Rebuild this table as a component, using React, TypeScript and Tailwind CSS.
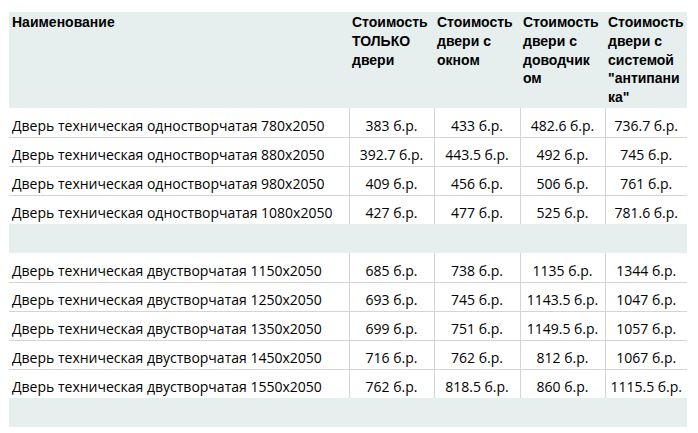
import type { ReactNode } from "react";

const headers: ReactNode[] = [
  "Наименование",
  "Стоимость ТОЛЬКО двери",
  "Стоимость двери с окном",
  <>
    Стоимость двери с доводчик
    <br />
    ом
  </>,
  'Стоимость двери с системой "антипаника"',
];

type Row = [string, string, string, string, string];

const single: Row[] = [
  ["Дверь техническая одностворчатая 780x2050", "383 б.р.", "433 б.р.", "482.6 б.р.", "736.7 б.р."],
  ["Дверь техническая одностворчатая 880x2050", "392.7 б.р.", "443.5 б.р.", "492 б.р.", "745 б.р."],
  ["Дверь техническая одностворчатая 980x2050", "409 б.р.", "456 б.р.", "506 б.р.", "761 б.р."],
  ["Дверь техническая одностворчатая 1080x2050", "427 б.р.", "477 б.р.", "525 б.р.", "781.6 б.р."],
];

const double: Row[] = [
  ["Дверь техническая двустворчатая 1150x2050", "685 б.р.", "738 б.р.", "1135 б.р.", "1344 б.р."],
  ["Дверь техническая двустворчатая 1250x2050", "693 б.р.", "745 б.р.", "1143.5 б.р.", "1047 б.р."],
  ["Дверь техническая двустворчатая 1350x2050", "699 б.р.", "751 б.р.", "1149.5 б.р.", "1057 б.р."],
  ["Дверь техническая двустворчатая 1450x2050", "716 б.р.", "762 б.р.", "812 б.р.", "1067 б.р."],
  ["Дверь техническая двустворчатая 1550x2050", "762 б.р.", "818.5 б.р.", "860 б.р.", "1115.5 б.р."],
];

const DataRows = ({ rows }: { rows: Row[] }) => (
  <>
    {rows.map((row, r) => {
      const last = r === rows.length - 1;
      return (
        <tr key={row[0]} className="h-[29px]">
          {row.map((cell, c) => (
            <td
              key={c}
              className={`align-bottom p-0 pb-[2px] whitespace-nowrap ${
                c === 0 ? "text-left pl-[3px]" : "text-center"
              } ${c < 4 ? "border-r border-[#d4d4d4]" : ""} ${
                last ? "" : "border-b border-[#d4d4d4]"
              }`}
            >
              {cell}
            </td>
          ))}
        </tr>
      );
    })}
  </>
);

const Spacer = () => (
  <tr className="h-[29px] bg-[#e6eeee]">
    <td colSpan={5} />
  </tr>
);

export default function App() {
  return (
    <div className="w-[698px] h-[433px] bg-white pl-[9px] pt-[12px] overflow-hidden">
      <table
        className="table-fixed border-collapse w-[678px] text-[14px] text-black leading-[19px]"
        style={{ fontFamily: '"Open Sans", sans-serif' }}
      >
        <colgroup>
          <col className="w-[340px]" />
          <col className="w-[85px]" />
          <col className="w-[86px]" />
          <col className="w-[85px]" />
          <col className="w-[82px]" />
        </colgroup>
        <thead>
          <tr className="h-[96px] bg-[#e6eeee]">
            {headers.map((h, i) => (
              <th
                key={i}
                className="align-top text-left font-bold px-[3px] pt-[1px] text-[14px] leading-[18.75px] [overflow-wrap:anywhere]"
                style={{ fontFamily: '"Liberation Sans", Arial, sans-serif' }}
              >
                {h}
              </th>
            ))}
          </tr>
        </thead>
        <tbody>
          <DataRows rows={single} />
          <Spacer />
          <DataRows rows={double} />
          <Spacer />
        </tbody>
      </table>
    </div>
  );
}
